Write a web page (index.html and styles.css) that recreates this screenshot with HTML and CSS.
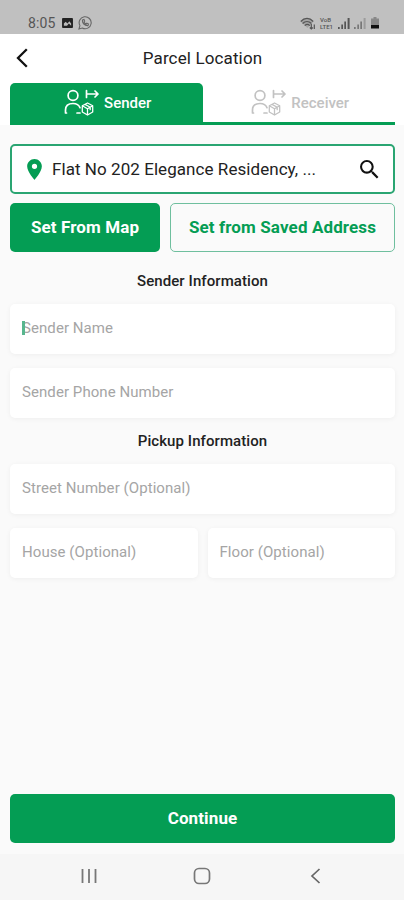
FILE: index.html
```html
<!DOCTYPE html>
<html lang="en">
<head>
  <meta charset="UTF-8" />
  <meta name="viewport" content="width=device-width, initial-scale=1.0" />
  <title>Parcel Location</title>
  <link rel="stylesheet" href="styles.css">
</head>
<body>
  <!-- shared tab icon -->
  <svg class="sprite" xmlns="http://www.w3.org/2000/svg">
    <symbol id="parcel-user" viewBox="0 0 36 28">
      <g fill="none" stroke="currentColor" stroke-width="1.7" stroke-linecap="round" stroke-linejoin="round">
        <circle cx="9" cy="6.5" r="4.900" />
        <path d="M1.500 24v-3c0-4 2.800-6.500 7.500-6.500 3.800 0 6 1.500 7 4.200M1.500 24h1M13 24h3" />
        <path d="M22.500 1.500v7M23 5h11M31 2l3 3-3 3" />
        <path stroke-width="1.300" d="M23.500 14l5.200 2.800v6.200l-5.200 3-5.200-3v-6.200zM18.300 16.800l5.200 3 5.200-3M23.500 19.800v6M21 15.400l5.200 2.800v2.500" />
      </g>
    </symbol>
  </svg>

  <div class="status-bar">
    <span class="clock">8:05</span>
    <svg class="status-photo" viewBox="0 0 12 11">
      <rect width="12" height="11" rx="1" fill="#222" />
      <path d="M2 8.500V6l2-2 2 2 2-2.500L10 6v2.500L7.500 6 5.500 8.500z" fill="#bbb" />
    </svg>
    <svg class="status-chat" viewBox="0 0 14 14">
      <path d="M1 13l.9-3.400A6 6 0 1 1 4.300 12zM4.600 4c-.8 2.800 2.300 6 5.400 5.600l.5-1.600-1.700-.8-.8.8c-.9-.4-1.700-1.200-2-2l.7-.8-.7-1.700z" fill="none" stroke="#666" stroke-width="1.100" />
    </svg>
    <div class="status-right">
      <svg class="status-wifi" viewBox="0 0 16 13">
        <path d="M.5 4.500C4.500.2 9.500.2 13.500 4.500L7.500 11z" fill="#777" opacity=".4" />
        <g fill="none" stroke="#555" stroke-width="1.200">
          <path d="M.8 4.500C4.500.4 9.500.4 13.200 4.500M2.600 6.500c2.600-2.600 6.200-2.600 8.800 0M4.800 8.700c1.500-1.500 3.500-1.500 5 0" />
          <path d="M11.300 7v5M9.800 10.500l1.500 1.500 1.500-1.500M14.300 12V7.500" />
        </g>
      </svg>
      <div class="volte">VoB<br>LTE1</div>
      <svg class="status-signal" viewBox="0 0 12 12" fill="#555">
        <path d="M0 10h1.700v2H0zM3.300 7.500H5V12H3.300zM6.300 4.500H8V12H6.300zM9.600 1h2v11h-2z" />
      </svg>
      <svg class="status-signal" viewBox="0 0 12 12" fill="#777">
        <path d="M0 10h1.700v2H0zM3.300 7.500H5V12H3.300zM6.300 4.500H8V12H6.300z" />
        <path d="M9.600 1h2v11h-2z" opacity=".5" />
      </svg>
      <svg class="status-battery" viewBox="0 0 8 12">
        <path d="M2.500 0h3v1.500H8V8H0V1.500h2.500z" fill="#888" />
        <path d="M0 8h8v3.500H0z" fill="#111" />
      </svg>
    </div>
  </div>

  <header class="header">
    <svg class="back" viewBox="0 0 12 20">
      <path d="M10.800 1.200L2 10l8.800 8.800" fill="none" stroke="#111" stroke-width="2.300" />
    </svg>
    <h1>Parcel Location</h1>
  </header>

  <nav class="tabs">
    <div class="tab active">
      <svg class="tab-icon"><use href="#parcel-user" /></svg>
      <span>Sender</span>
    </div>
    <div class="tab">
      <svg class="tab-icon"><use href="#parcel-user" /></svg>
      <span>Receiver</span>
    </div>
  </nav>

  <main class="content">
    <div class="address">
      <svg class="pin" viewBox="0 0 14 20">
        <path fill="#049d54" d="M7 0C3.130 0 0 3.130 0 7c0 5.250 7 13 7 13s7-7.750 7-13c0-3.870-3.130-7-7-7zm0 9.500a2.500 2.500 0 1 1 0-5 2.500 2.500 0 0 1 0 5z" />
      </svg>
      <span class="address-text">Flat No 202 Elegance Residency, ...</span>
      <svg class="search" viewBox="0 0 18 18">
        <path fill="#111" d="M12.500 11h-.79l-.28-.27A6.471 6.471 0 0 0 13 6.500 6.500 6.500 0 1 0 6.500 13c1.610 0 3.090-.59 4.230-1.570l.27.28v.79l5 4.990L17.490 16l-4.990-5zm-6 0C4.010 11 2 8.990 2 6.500S4.010 2 6.500 2 11 4.010 11 6.500 8.990 11 6.500 11z" />
      </svg>
    </div>

    <div class="actions">
      <button class="btn btn-fill">Set From Map</button>
      <button class="btn btn-outline">Set from Saved Address</button>
    </div>

    <h2>Sender Information</h2>
    <div class="field focused"><span>Sender Name</span></div>
    <div class="field"><span>Sender Phone Number</span></div>

    <h2>Pickup Information</h2>
    <div class="field"><span>Street Number (Optional)</span></div>
    <div class="row">
      <div class="field"><span>House (Optional)</span></div>
      <div class="field"><span>Floor (Optional)</span></div>
    </div>

    <button class="btn btn-fill btn-continue">Continue</button>
  </main>

  <footer class="nav-bar">
    <svg viewBox="0 0 18 18"><path d="M2.500 2v14M9 2v14M15.500 2v14" stroke="#777" stroke-width="1.800" /></svg>
    <svg viewBox="0 0 18 18"><rect x="1.500" y="1.500" width="15" height="15" rx="4.500" fill="none" stroke="#777" stroke-width="1.700" /></svg>
    <svg viewBox="0 0 18 18"><path d="M13.500 2L6 9l7.500 7" fill="none" stroke="#666" stroke-width="1.700" /></svg>
  </footer>
</body>
</html>
```
FILE: styles.css
```css
* {
  box-sizing: border-box;
}
body {
  margin: 0;
  height: 900px;
  display: flex;
  flex-direction: column;
  font-family: Roboto, "Liberation Sans", sans-serif;
  background: #fafafa;
  color: #222;
}
svg {
  display: block;
  flex: none;
}
.sprite {
  display: none;
}

/* status bar */
.status-bar {
  height: 34px;
  padding: 12px 25px 0 28px;
  display: flex;
  align-items: center;
  background: #c0c0c0;
}
.clock {
  width: 34px;
  font-size: 14px;
  line-height: 22px;
  letter-spacing: 0.1px;
  color: #555;
}
.status-photo {
  width: 11px;
  height: 10px;
}
.status-chat {
  width: 14px;
  height: 14px;
  margin-left: 5px;
}
.status-right {
  margin-left: auto;
  display: flex;
  align-items: center;
}
.status-wifi {
  width: 16px;
  height: 13px;
}
.volte {
  width: 15px;
  margin: 0 3px 0 4px;
  font-size: 6px;
  font-weight: 500;
  line-height: 7px;
  color: #555;
}
.status-signal {
  width: 12px;
  height: 12px;
  margin-right: 4px;
}
.status-battery {
  width: 8px;
  height: 12px;
  margin-left: 1px;
}

/* title */
.header {
  height: 49px;
  padding: 0 16px 2px;
  display: flex;
  align-items: center;
  background: #fff;
}
.back {
  width: 12px;
  height: 20px;
}
h1 {
  flex: 1;
  margin: 0 11px 0 0;
  text-align: center;
  font-size: 17px;
  font-weight: 400;
  letter-spacing: 0.13px;
}

/* sender / receiver tabs */
.tabs {
  height: 42px;
  padding: 0 9px 0 10px;
  display: flex;
  background: #fff;
}
.tab {
  flex: 1;
  height: 42px;
  padding-left: 3px;
  display: flex;
  align-items: center;
  justify-content: center;
  gap: 4px;
  color: #c2c2c2;
  font-size: 15px;
  font-weight: 500;
  border-bottom: 3px solid #049d54;
}
.tab.active {
  color: #fff;
  background: #049d54;
  border-radius: 5px 5px 0 0;
}
.tab-icon {
  width: 36px;
  height: 28px;
}

/* form */
.content {
  flex: 1;
  padding: 19px 9px 11px 10px;
  display: flex;
  flex-direction: column;
}
.address {
  height: 50px;
  padding: 0 14px 0 15px;
  display: flex;
  align-items: center;
  background: #fff;
  border: 2px solid #2aa572;
  border-radius: 5px;
}
.pin {
  width: 15px;
  height: 21px;
}
.address-text {
  flex: 1;
  margin-left: 10px;
  font-size: 17px;
  letter-spacing: 0.06px;
}
.search {
  width: 19px;
  height: 19px;
}
.actions {
  margin-top: 9px;
  display: flex;
  gap: 10px;
}
.btn {
  height: 49px;
  padding: 0 0 2px;
  font-family: inherit;
  font-size: 17px;
  font-weight: 700;
  letter-spacing: 0.12px;
  border: 0;
  border-radius: 5px;
}
.btn-fill {
  width: 150px;
  color: #fff;
  background: #049d54;
}
.btn-outline {
  flex: 1;
  color: #049d54;
  background: transparent;
  border: 1px solid #6fbf9e;
}
h2 {
  margin: 19px 0 13px;
  text-align: center;
  font-size: 15px;
  font-weight: 500;
  line-height: 20px;
  letter-spacing: 0.08px;
}
.field {
  height: 50px;
  margin-bottom: 14px;
  padding: 0 0 2px 12px;
  display: flex;
  align-items: center;
  background: #fff;
  border-radius: 5px;
  box-shadow: 0 1px 5px rgba(0, 0, 0, 0.05);
  font-size: 15px;
  letter-spacing: 0.07px;
  color: #a5a5a5;
}
.field + h2 {
  margin-top: -1px;
}
.focused span {
  position: relative;
}
.focused span::before {
  content: "";
  position: absolute;
  left: 0;
  top: 2px;
  width: 3px;
  height: 14px;
  background: #58b68e;
}
.row {
  display: flex;
  gap: 10px;
}
.row .field {
  flex: 1;
}
.btn-continue {
  width: 100%;
  margin-top: auto;
}

/* android navigation */
.nav-bar {
  height: 46px;
  padding: 0 80px 2px;
  display: flex;
  align-items: center;
  justify-content: space-between;
  background: #f6f6f6;
}
.nav-bar svg {
  width: 18px;
  height: 18px;
}
```
